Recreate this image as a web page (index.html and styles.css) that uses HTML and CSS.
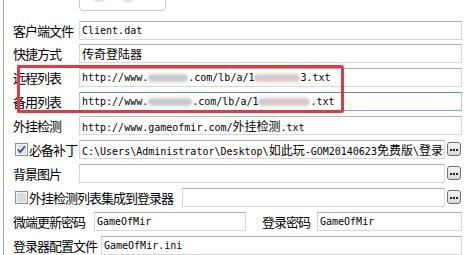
FILE: index.html
```html
<!DOCTYPE html>
<html>
<head>
<meta charset="utf-8">
<title>登录器配置</title>
<link rel="stylesheet" href="styles.css">
</head>
<body>
<div class="window">
	<div class="preview"><span class="blob b1"></span><span class="blob b2"></span></div>

	<div class="row first">
		<div class="label">客户端文件</div>
		<div class="field">Client.dat</div>
	</div>
	<div class="row">
		<div class="label">快捷方式</div>
		<div class="field"><span class="cjk">传奇登陆器</span></div>
	</div>
	<div class="row">
		<div class="label">远程列表</div>
		<div class="field">http://www.<span class="blob w40"></span>.com/lb/a/1<span class="blob w46 pink"></span>3.txt</div>
	</div>
	<div class="row">
		<div class="label">备用列表</div>
		<div class="field focus">http://www.<span class="blob w44"></span>.com/lb/a/1<span class="blob w52 pink"></span>.txt</div>
	</div>
	<div class="row">
		<div class="label">外挂检测</div>
		<div class="field">http://www.gameofmir.com/<span class="cjk">外挂检测</span>.txt</div>
	</div>
	<div class="row">
		<div class="check on">
			<svg width="13" height="13" viewBox="0 0 13 13"><rect x="0.5" y="0.5" width="12" height="12" fill="#f4f4f4" stroke="#8e8f8f"/><rect x="2" y="2" width="9" height="9" fill="#dfe3e8"/><path d="M3 6.5 L5.2 9 L10 3.2" fill="none" stroke="#2b4f9e" stroke-width="1.8"/></svg>
		</div>
		<div class="label short">必备补丁</div>
		<div class="field">C:\Users\Administrator\Desktop\<span class="cjk">如此玩</span>-GOM20140623<span class="cjk">免费版</span>\<span class="cjk">登录器</span></div>
		<div class="browse"><svg width="8" height="3" viewBox="0 0 8 3"><rect x="0" y="0" width="2" height="2"/><rect x="3" y="0" width="2" height="2"/><rect x="6" y="0" width="2" height="2"/></svg></div>
	</div>
	<div class="row">
		<div class="label">背景图片</div>
		<div class="field"></div>
		<div class="browse"><svg width="8" height="3" viewBox="0 0 8 3"><rect x="0" y="0" width="2" height="2"/><rect x="3" y="0" width="2" height="2"/><rect x="6" y="0" width="2" height="2"/></svg></div>
	</div>
	<div class="row">
		<div class="check">
			<svg width="13" height="13" viewBox="0 0 13 13"><rect x="0.5" y="0.5" width="12" height="12" fill="#f4f4f4" stroke="#8e8f8f"/><rect x="2" y="2" width="9" height="9" fill="#d9dcdf"/></svg>
		</div>
		<div class="label long">外挂检测列表集成到登录器</div>
		<div class="field"></div>
		<div class="browse"><svg width="8" height="3" viewBox="0 0 8 3"><rect x="0" y="0" width="2" height="2"/><rect x="3" y="0" width="2" height="2"/><rect x="6" y="0" width="2" height="2"/></svg></div>
	</div>
	<div class="row">
		<div class="label pw">微端更新密码</div>
		<div class="field small">GameOfMir</div>
		<div class="label pw2">登录密码</div>
		<div class="field">GameOfMir</div>
	</div>
	<div class="row">
		<div class="label cfg">登录器配置文件</div>
		<div class="field">GameOfMir.ini</div>
	</div>

	<div class="mark"></div>
</div>
</body>
</html>
```

FILE: styles.css
```css
html,body{
	margin:0;
	padding:0;
	background:#ffffff;
}
body{
	width:464px;
	height:255px;
	overflow:hidden;
}
.window{
	display:flow-root;
	position:relative;
	margin-left:3px;
	height:255px;
	border-left:1px solid #a9a9a9;
	padding:0 2px 0 9px;
	box-sizing:border-box;
	font-family:"Noto Sans CJK SC",sans-serif;
	font-size:12px;
	color:#000;
}
.preview{
	margin:-11px 0 8px 66px;
	width:87px;
	height:22px;
	border:1px solid #c9c9c9;
	border-radius:4px;
	box-sizing:border-box;
	position:relative;
	overflow:hidden;
}
.preview .blob{
	position:absolute;
	top:8px;
	height:3px;
}
.preview .b1{ left:14px; width:10px; }
.preview .b2{ left:44px; width:8px; }
.row{
	display:flex;
	align-items:flex-start;
	height:24px;
	padding-top:2px;
	box-sizing:border-box;
}
.row.first{
	height:23px;
}
.label{
	width:66px;
	height:19px;
	line-height:19px;
	font-size:13px;
	letter-spacing:-1px;
	white-space:nowrap;
	flex:none;
}
.label.short{ width:50px; }
.label.long{ width:153px; }
.label.pw{ width:81px; }
.label.pw2{ width:55px; margin-left:16px; }
.label.cfg{ width:88px; }
.check{
	flex:none;
	width:13px;
	height:13px;
	margin:3px 1px 0 2px;
}
.check svg{ display:block; }
.field{
	flex:1;
	min-width:0;
	height:19px;
	box-sizing:border-box;
	border:1px solid #d5d9de;
	border-top-color:#acafb5;
	padding-left:2px;
	font-family:"DejaVu Sans Mono","Noto Sans CJK SC",monospace;
	font-size:10px;
	line-height:17px;
	white-space:nowrap;
	overflow:hidden;
}
.field.focus{
	border-color:#a9c6e6;
	border-top-color:#5b8ac4;
	border-bottom-color:#7ea4d2;
}
.field.small{
	flex:none;
	width:152px;
}
.cjk{
	font-family:"Noto Sans CJK SC",sans-serif;
	font-size:12px;
}
.blob{
	display:inline-block;
	height:8px;
	vertical-align:-1px;
	background:#c9c9c9;
	border-radius:4px;
	filter:blur(1.5px);
}
.blob.pink{ background:#d9c8ca; }
.w40{ width:40px; }
.w44{ width:44px; }
.w46{ width:46px; }
.w52{ width:52px; }
.browse{
	flex:none;
	width:14px;
	height:14px;
	margin:2px 1px 0 2px;
	border:1px solid #6f6f6f;
	border-radius:3px;
	box-sizing:border-box;
	background:linear-gradient(#f6f6f6,#dadada);
	display:flex;
	align-items:flex-end;
	justify-content:center;
	padding-bottom:3px;
}
.browse svg{ display:block; fill:#222; }
.mark{
	position:absolute;
	left:13px;
	top:65px;
	width:327px;
	height:48px;
	border:3px solid #e4393e;
	border-radius:1px 3px 2px 1px;
	box-sizing:border-box;
}
```
